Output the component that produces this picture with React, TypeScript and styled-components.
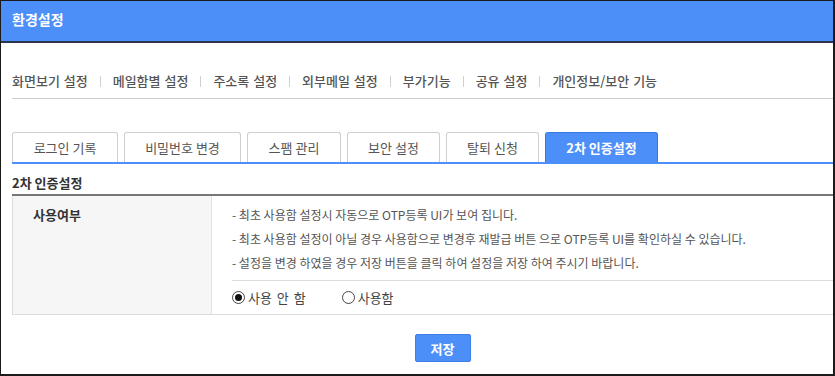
import { useState } from "react";
import styled, { createGlobalStyle } from "styled-components";

const GlobalStyle = createGlobalStyle`
  html, body {
    margin: 0;
    padding: 0;
    background: #fff;
  }
  body {
    font-family: "Noto Sans CJK KR", "Noto Sans", sans-serif;
    color: #444;
  }
  * {
    box-sizing: border-box;
  }
`;

const menus = ["화면보기 설정", "메일함별 설정", "주소록 설정", "외부메일 설정", "부가기능", "공유 설정", "개인정보/보안 기능"];
const tabs = [
  { label: "로그인 기록", width: 106 },
  { label: "비밀번호 변경", width: 117 },
  { label: "스팸 관리", width: 94 },
  { label: "보안 설정", width: 93 },
  { label: "탈퇴 신청", width: 93 },
  { label: "2차 인증설정", width: 113 },
];
const notices = [
  "- 최초 사용함 설정시 자동으로 OTP등록 UI가 보여 집니다.",
  "- 최초 사용함 설정이 아닐 경우 사용함으로 변경후 재발급 버튼 으로 OTP등록 UI를 확인하실 수 있습니다.",
  "- 설정을 변경 하였을 경우 저장 버튼을 클릭 하여 설정을 저장 하여 주시기 바랍니다.",
];

export default function App() {
  const [use, setUse] = useState(false);

  return (
    <Frame>
      <GlobalStyle />
      <Header>환경설정</Header>
      <Content>
        <Menu>
          {menus.map((m, i) => (
            <MenuItem key={m} $first={i === 0}>
              {m}
            </MenuItem>
          ))}
        </Menu>

        <Tabs>
          {tabs.map((t, i) => (
            <Tab key={t.label} $width={t.width} $active={i === tabs.length - 1}>
              {t.label}
            </Tab>
          ))}
        </Tabs>

        <SectionTitle>2차 인증설정</SectionTitle>

        <Table>
          <Label>사용여부</Label>
          <Cell>
            <Notices>
              {notices.map((n) => (
                <li key={n}>{n}</li>
              ))}
            </Notices>
            <RadioRow>
              <RadioLabel onClick={() => setUse(false)}>
                <Radio $checked={!use} />
                사용 안 함
              </RadioLabel>
              <RadioLabel onClick={() => setUse(true)}>
                <Radio $checked={use} />
                사용함
              </RadioLabel>
            </RadioRow>
          </Cell>
        </Table>

        <Actions>
          <SaveButton>저장</SaveButton>
        </Actions>
      </Content>
    </Frame>
  );
}

const Frame = styled.div`
  width: 835px;
  height: 376px;
  border-top: 1px solid #1b1b1b;
  border-left: 1px solid #1b1b1b;
  border-right: 2px solid #1b1b1b;
  border-bottom: 2px solid #1b1b1b;
  display: flex;
  flex-direction: column;
  overflow: hidden;
`;

const Header = styled.div`
  height: 42px;
  background: #4d8ff9;
  border-bottom: 2px solid #2a3552;
  color: #fff;
  font-size: 14px;
  font-weight: 700;
  line-height: 20px;
  padding: 8px 0 0 11px;
`;

const Content = styled.div`
  padding-left: 11px;
  display: flex;
  flex-direction: column;
`;

const Menu = styled.div`
  display: flex;
  align-items: center;
  padding: 28px 0 7px 0;
  border-bottom: 1px solid #cfcfcf;
  font-size: 13px;
  line-height: 20px;
  font-weight: 500;
  word-spacing: 1px;
  color: #555;
`;

const MenuItem = styled.span<{ $first: boolean }>`
  display: flex;
  align-items: center;

  &::before {
    content: "";
    display: ${(p) => (p.$first ? "none" : "block")};
    width: 1px;
    height: 11px;
    background: #d0d0d0;
    margin: 0 12px;
  }
`;

const Tabs = styled.div`
  display: flex;
  gap: 6px;
  margin-top: 33px;
  border-bottom: 2px solid #4d8ff9;
`;

const Tab = styled.div<{ $width: number; $active: boolean }>`
  width: ${(p) => p.$width}px;
  height: 30px;
  display: flex;
  align-items: center;
  justify-content: center;
  font-size: 13px;
  font-weight: ${(p) => (p.$active ? 700 : 400)};
  color: ${(p) => (p.$active ? "#fff" : "#555")};
  background: ${(p) => (p.$active ? "#4d8ff9" : "#fff")};
  border: 1px solid ${(p) => (p.$active ? "#3a78dc" : "#cfcfcf")};
  border-bottom: none;
  border-radius: 3px 3px 0 0;
  margin-bottom: ${(p) => (p.$active ? "-1px" : "0")};
`;

const SectionTitle = styled.div`
  font-size: 13px;
  font-weight: 700;
  color: #333;
  line-height: 18px;
  padding: 10px 0 2px 0;
`;

const Table = styled.div`
  display: grid;
  grid-template-columns: 200px 1fr;
  border-top: 2px solid #777;
  border-bottom: 1px solid #dcdcdc;
`;

const Label = styled.div`
  background: #f6f6f6;
  border-left: 1px solid #dcdcdc;
  border-right: 1px solid #e3e3e3;
  padding: 7px 0 0 20px;
  font-size: 13px;
  font-weight: 700;
  line-height: 24px;
  color: #333;
`;

const Cell = styled.div`
  padding: 7px 0 0 20px;
  display: flex;
  flex-direction: column;
`;

const Notices = styled.ul`
  list-style: none;
  margin: 0;
  padding: 0 0 5px 0;
  border-bottom: 1px solid #dcdcdc;
  font-size: 12px;
  line-height: 24px;
  color: #555;
`;

const RadioRow = styled.div`
  display: flex;
  align-items: center;
  gap: 36px;
  height: 33px;
`;

const RadioLabel = styled.label`
  display: flex;
  align-items: center;
  gap: 3px;
  font-size: 13px;
  word-spacing: 2px;
  color: #444;
  cursor: pointer;
`;

const Radio = styled.span<{ $checked: boolean }>`
  width: 13px;
  height: 13px;
  border-radius: 50%;
  border: 1px solid #444;
  display: flex;
  align-items: center;
  justify-content: center;

  &::after {
    content: "";
    width: 7px;
    height: 7px;
    border-radius: 50%;
    background: #111;
    display: ${(p) => (p.$checked ? "block" : "none")};
  }
`;

const Actions = styled.div`
  display: flex;
  justify-content: center;
  padding-top: 19px;
  padding-left: 40px;
`;

const SaveButton = styled.button`
  width: 56px;
  height: 28px;
  background: #4d8ff9;
  border: 1px solid #3d7fe8;
  border-radius: 2px;
  color: #fff;
  font-family: inherit;
  font-size: 13px;
  font-weight: 700;
  cursor: pointer;
`;
